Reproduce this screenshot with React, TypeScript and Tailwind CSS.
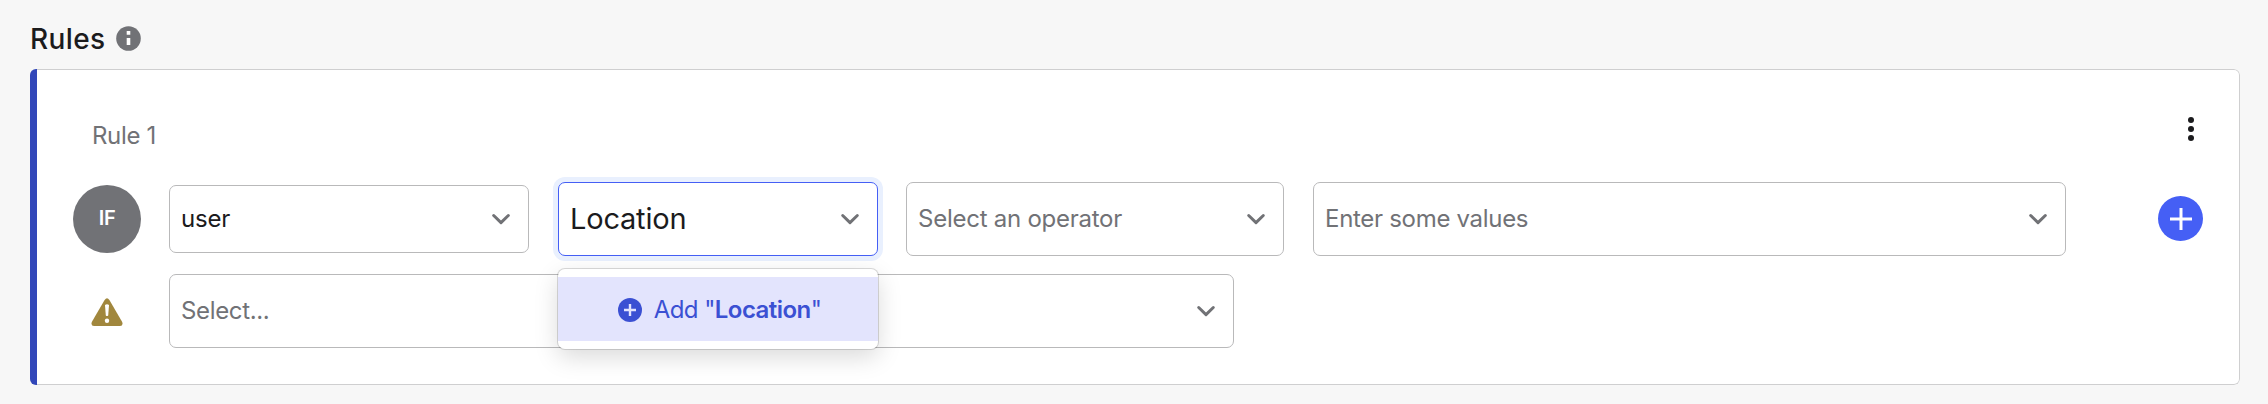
import type { ReactNode } from "react";

function Chevron() {
  return (
    <svg className="mr-[15px] h-6 w-6 shrink-0" viewBox="0 0 24 24" fill="none" stroke="#717276" strokeWidth="3">
      <path d="M4.700 8.500 12 15.600l7.300-7.100" strokeLinecap="round" strokeLinejoin="round" />
    </svg>
  );
}

function Select({ className, children }: { className: string; children: ReactNode }) {
  return (
    <div className={`flex items-center justify-between rounded-[7px] border bg-white pl-[11px] ${className}`}>
      {children}
      <Chevron />
    </div>
  );
}

export default function App() {
  return (
    <div className="h-[404px] w-[2268px] overflow-hidden bg-[#f7f7f7] pl-[30px] font-['Inter',sans-serif] text-[#1b1b1d]">
      <header className="flex h-[69px] items-center gap-[10px] pt-2">
        <h1 className="text-[28px] leading-[34px] font-medium tracking-[0.4px]">Rules</h1>
        <svg className="h-[25px] w-[25px]" viewBox="0 0 25 25">
          <circle cx="12.5" cy="12.5" r="12.3" fill="#717276" />
          <path d="M10.700 5h3.600v3.800h-3.600zM10.700 12h3.600V19h-3.600z" fill="#fff" />
        </svg>
      </header>

      <section className="flex h-[316px] w-[2210px] overflow-hidden rounded-[6px]">
        <div className="w-[7px] bg-[#3247b9]" />
        <div className="flex-1 rounded-r-[6px] border border-l-0 border-[#cfcfd0] bg-white pl-9">
          <div className="flex h-28 items-start justify-between pr-[36px]">
            <h2 className="mt-[51px] ml-[19px] text-[24px] leading-[30px] tracking-[-0.35px] text-[#717276]">Rule 1</h2>
            <svg className="mt-[45px] h-[30px] w-6" viewBox="0 0 24 30" fill="#1b1b1d">
              <circle cx="12" cy="5" r="3" />
              <circle cx="12" cy="14" r="3" />
              <circle cx="12" cy="23" r="3" />
            </svg>
          </div>

          <div className="flex h-[74px] items-center">
            <div className="mr-7 flex h-[68px] w-[68px] items-center justify-center rounded-full bg-[#717276] pb-[2px] text-[20px] font-semibold tracking-[-0.4px] text-white">
              IF
            </div>
            <Select className="mr-[29px] h-[68px] w-[360px] border-[#b9b9ba] text-[24px] tracking-[-0.2px]">user</Select>
            <div className="relative mr-7">
              <Select className="h-[74px] w-[320px] border-[#455ff5] text-[29px] tracking-[-0.2px] shadow-[0_0_0_5px_#e9f0fe]">Location</Select>
              <div className="absolute top-[87px] left-0 z-10 h-[80px] w-[320px] rounded-[7px] bg-white py-2 shadow-[0_0_0_1px_rgba(0,0,0,0.14),0_8px_24px_rgba(0,0,0,0.15)]">
                <div className="flex h-16 items-center justify-center gap-3 bg-[#e3e4fd] pt-px pl-[3px] text-[24px] tracking-[-0.550px] text-[#3b50d3]">
                  <svg className="h-6 w-6" viewBox="0 0 24 24">
                    <circle cx="12" cy="12" r="12" fill="#3b50d3" />
                    <path d="M12 6v12M6 12h12" stroke="#e3e4fd" strokeWidth="2.4" />
                  </svg>
                  <span>
                    Add "<span className="font-semibold">Location</span>"
                  </span>
                </div>
              </div>
            </div>
            <Select className="mr-[29px] h-[74px] w-[378px] border-[#b9b9ba] text-[24px] tracking-[-0.25px] text-[#717276]">
              Select an operator
            </Select>
            <Select className="mr-[92px] h-[74px] w-[753px] border-[#b9b9ba] text-[24px] tracking-[-0.3px] text-[#717276]">
              Enter some values
            </Select>
            <svg className="mb-px h-[45px] w-[45px]" viewBox="0 0 45 45">
              <circle cx="22.5" cy="22.5" r="22.5" fill="#455ff5" />
              <path d="M23 12v22M12 23h22" stroke="#fff" strokeWidth="3" />
            </svg>
          </div>

          <div className="mt-[18px] flex h-[74px] items-center">
            <div className="mr-7 flex w-[68px] justify-center pt-px">
              <svg className="h-7 w-8" viewBox="0 0 32 28">
                <path d="M13.6 1.9Q16-1.2 18.4 1.9L31.2 24Q32.4 27.8 29 28H3Q-.4 27.8.8 24Z" fill="#a1873d" />
                <path d="M14 7q2-1.5 4 0l-.8 10.5q-1.2 1.2-2.4 0Z" fill="#fff" />
                <circle cx="16" cy="22.8" r="2.2" fill="#fff" />
              </svg>
            </div>
            <Select className="h-[74px] w-[1065px] border-[#b9b9ba] text-[24px] tracking-[-0.35px] text-[#717276]">Select...</Select>
          </div>
        </div>
      </section>
    </div>
  );
}
